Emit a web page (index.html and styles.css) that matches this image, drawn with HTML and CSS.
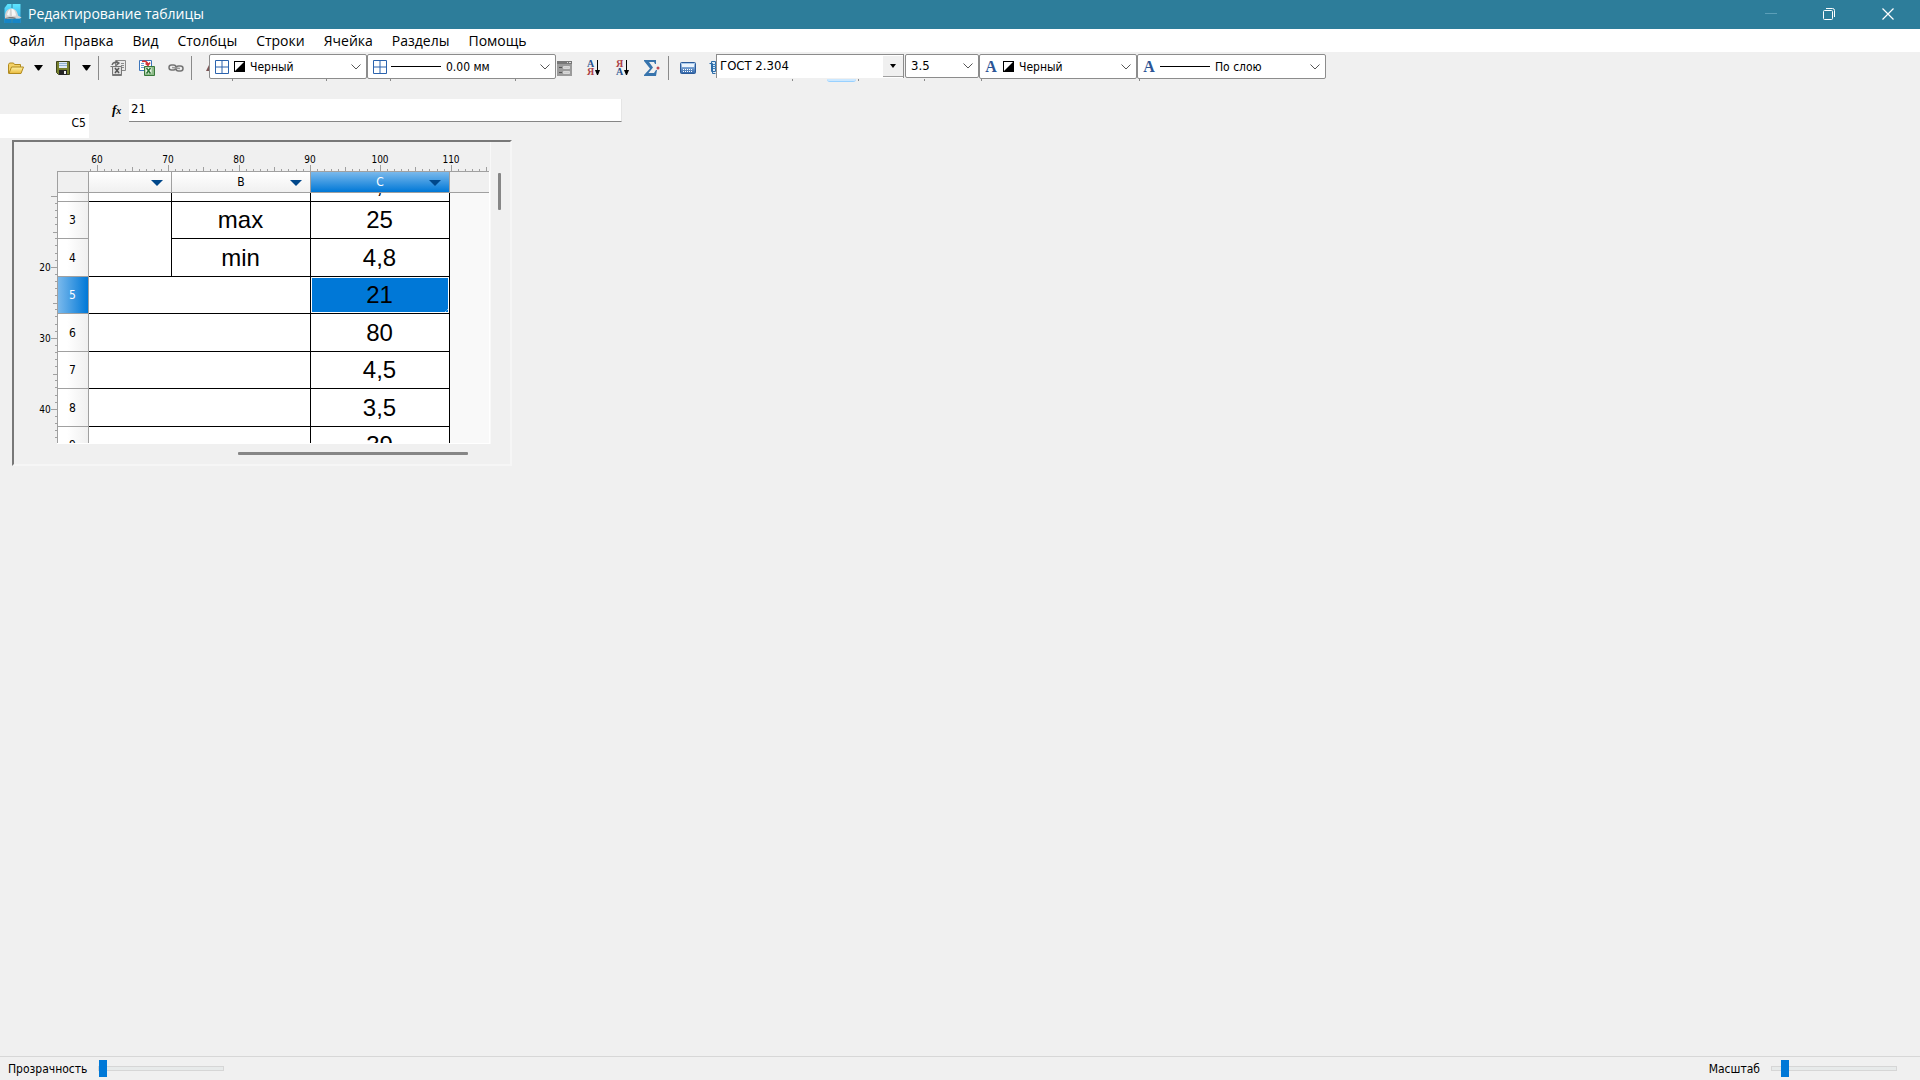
FILE: index.html
```html
<!DOCTYPE html>
<html lang="ru">
<head>
<meta charset="utf-8">
<title>Редактирование таблицы</title>
<link rel="stylesheet" href="styles.css">
</head>
<body>
<svg class="defs" aria-hidden="true">
  <defs>
    <linearGradient id="gold" x1="0" y1="0" x2="0" y2="1"><stop offset="0" stop-color="#fff3a8"/><stop offset="1" stop-color="#e9b93a"/></linearGradient>
    <linearGradient id="sky" x1="0" y1="0" x2="0" y2="1"><stop offset="0" stop-color="#5fe6ff"/><stop offset="1" stop-color="#2a9be0"/></linearGradient>
    <linearGradient id="calc" x1="0" y1="0" x2="0" y2="1"><stop offset="0" stop-color="#b4d4f4"/><stop offset="1" stop-color="#2f64a8"/></linearGradient>
    <symbol id="grid" viewBox="0 0 14 14"><path d="M.5.5h13v13H.5zM7 0v14M0 7h14" fill="#fff" stroke="#2b63ad"/></symbol>
    <symbol id="swatch" viewBox="0 0 11 11"><path d="M0 0h11v11H0z"/><path d="M1 1h9L1 10z" fill="#fff"/></symbol>
    <symbol id="chevron" viewBox="0 0 10 6"><path d="M.5.5L5 5 9.500.5" fill="none" stroke="#555"/></symbol>
    <symbol id="tri" viewBox="0 0 9 6"><path d="M0 0h9L5 5.500H4z"/></symbol>
    <symbol id="filter" viewBox="0 0 12 6"><path d="M0 0h12L6 6z" fill="#00478a"/></symbol>
    <g id="hticks"><path d="M.5 23v6M35.500 25v4M7.500 27v2M14.500 27v2M21.500 27v2M28.500 27v2M42.500 27v2M49.500 27v2M57.500 27v2M64.500 27v2"/></g>
    <g id="vticks"><path d="M37 .5h6M39 36.500h4M41 7.500h2M41 14.500h2M41 21.500h2M41 28.500h2M41 42.500h2M41 49.500h2M41 57.500h2M41 64.500h2"/></g>
  </defs>
</svg>

<header class="titlebar">
  <svg class="logo" viewBox="0 0 18 20"><path d="M4 0h13v19H1V4z" fill="url(#sky)"/><path d="M1 13h7v6H1zM9 15h8v4H9z" fill="#1685c6"/><path d="M8.500 0v4M8.500 15v4" stroke="#2d7d9a"/><path d="M1.500 14V11.500C2 7 4.500 4.500 8 4.500s6 3 6.500 7l3.500 2c-1 1.200-4 1.200-6 .8L1.500 15z" fill="#d3d3d3"/><path d="M3.500 11c.5-3 1.500-4.500 3-5.500L6 12zM8 4.800c3 .5 4 3 4.500 6.700L8.500 12z" fill="#f6f6f6"/><path d="M1.500 14.500c3-2 8-2 11-.5l-1 1c-3-1-7-1-10 0z" fill="#777"/></svg>
  <h1>Редактирование таблицы</h1>
  <div class="winbuttons">
    <button disabled aria-label="Свернуть"><svg width="12" height="12"><path d="M0 5.500h12" stroke="#5c9fb8"/></svg></button>
    <button aria-label="Восстановить"><svg width="12" height="12" fill="none" stroke="#fff"><rect x=".5" y="2.500" width="9" height="9" rx="1"/><path d="M3 .5h6.500a2 2 0 0 1 2 2V9"/></svg></button>
    <button aria-label="Закрыть"><svg width="12" height="12" stroke="#fff" stroke-width="1.200"><path d="M.5.5l11 11M11.500.5l-11 11"/></svg></button>
  </div>
</header>

<nav class="menu">
  <a href="#">Файл</a><a href="#">Правка</a><a href="#">Вид</a><a href="#">Столбцы</a><a href="#">Строки</a><a href="#">Ячейка</a><a href="#">Разделы</a><a href="#">Помощь</a>
</nav>

<div class="toolbar">
  <div class="tools">
    <div class="split">
      <button aria-label="Открыть"><svg width="16" height="16" viewBox="0 0 16 16"><path d="M.5 13.500v-9l1-1.500h4l1 1.500h6v2.500" fill="#f4d267" stroke="#b18a1f"/><path d="M1 13.500L3.500 7h12L13 13.500z" fill="url(#gold)" stroke="#b18a1f"/></svg></button>
      <button aria-label="Варианты открытия"><svg width="9" height="6"><use href="#tri"/></svg></button>
    </div>
    <div class="split">
      <button aria-label="Сохранить"><svg width="16" height="16" viewBox="0 0 16 16"><path d="M.5 1.500h13v13h-11l-2-2z" fill="#77802c" stroke="#3d431d"/><path d="M3 2h8v6H3z" fill="#dfeaf5"/><path d="M3 3.500h8M3 5.500h8" stroke="#92b2d0"/><path d="M3 10h8v5H3z" fill="#252525"/><path d="M8 11h2v3H8z" fill="#eee"/></svg></button>
      <button aria-label="Варианты сохранения"><svg width="9" height="6"><use href="#tri"/></svg></button>
    </div>
  </div>
  <span class="sep"></span>
  <div class="tools">
    <button aria-label="Экспорт в Excel"><svg width="16" height="16" viewBox="0 0 16 16" fill="none"><path d="M5.500.5h10v10h-10z" fill="#e8e8e8" stroke="#8a8a8a"/><path d="M11 3.500h3M11 5.500h3M12 7.500h2" stroke="#8a8a8a"/><path d="M.5 6.500h2v9h9v-2" fill="#bbb" stroke="#777"/><path d="M2.500 6.500h9v8h-9z" fill="#dedede" stroke="#777"/><path d="M5 8l4 5M9 8l-4 5" stroke="#555" stroke-width="1.500"/><path d="M2 5c1-3 3-3 6-2M6 1l3 2-3 2.500" stroke="#666" stroke-width="1.300"/></svg></button>
    <button aria-label="Импорт из Excel"><svg width="16" height="16" viewBox="0 0 16 16" fill="none"><path d="M.5.500h12v10H.5z" fill="#fff" stroke="#3c75bb"/><path d="M2 3.500h3M2 5.500h3M2 7.500h3M9 3.500h2" stroke="#6a9bd1"/><path d="M5.500 15.500v-9h10v9z" fill="#8dbb89" stroke="#38783a"/><path d="M6.500 7.500h6v6h-6z" fill="#f2f8ef"/><path d="M7.500 8l4 5.500M11.500 8l-4 5.500" stroke="#2b7433" stroke-width="1.500"/><path d="M3 1.500c3-1 5 0 6 3M6.500 3.500L9 5.500l2-3" stroke="#d23338" stroke-width="1.500"/></svg></button>
    <button aria-label="Связь"><svg width="16" height="16" viewBox="0 0 16 16" fill="none" stroke="#747474" stroke-width="1.500"><rect x="1" y="5" width="7" height="5" rx="2.500"/><rect x="8" y="6" width="7" height="5" rx="2.500"/><path d="M4 7.500l8 1" stroke="#999"/></svg></button>
  </div>
  <span class="sep"></span>
  <svg class="sliver" width="3" height="16"><path d="M3 3L0 9h3z" fill="#7c5555"/></svg>

  <div class="combo color">
    <svg width="14" height="14"><use href="#grid"/></svg><svg width="11" height="11"><use href="#swatch"/></svg>
    <select aria-label="Цвет границы"><option>Черный</option></select>
    <svg width="10" height="6"><use href="#chevron"/></svg>
    <i class="notch n1"></i><i class="notch n2"></i>
  </div>
  <div class="combo line">
    <svg width="14" height="14"><use href="#grid"/></svg><span class="stroke"></span>
    <select aria-label="Толщина границы"><option>0.00 мм</option></select>
    <svg width="10" height="6"><use href="#chevron"/></svg>
    <i class="notch n1"></i><i class="notch n3"></i>
  </div>
  <div class="tools after">
    <button aria-label="Форма"><svg width="16" height="16" viewBox="0 0 16 16"><path d="M0 1h15v15H0z" fill="#9b9b9b"/><path d="M0 1h15v3H0z" fill="#777"/><path d="M10 2.500h1M12 2.500h2" stroke="#ddd"/><path d="M2 7.500h3M2 12.500h3" stroke="#555"/><path d="M6.500 6.500h6v2h-6zM6.500 11.500h6v2h-6z" fill="#ccc" stroke="#d8d8d8"/></svg></button>
    <button class="sort" aria-label="Сортировать по возрастанию"><span><b class="blue">А</b><b class="red">Я</b></span><svg width="5" height="16"><path d="M2.500 0v13" stroke="#000"/><path d="M0 10h5l-2 5H2z"/></svg></button>
    <button class="sort" aria-label="Сортировать по убыванию"><span><b class="red">Я</b><b class="blue">А</b></span><svg width="5" height="16"><path d="M2.500 0v13" stroke="#000"/><path d="M0 10h5l-2 5H2z"/></svg></button>
    <button aria-label="Сумма"><svg width="16" height="16" viewBox="0 0 16 16"><path d="M0 0h12v4h-1L10 2H5l4 5.500L4.500 13H10l2-3h1l-1 6H0v-1l6-6.500L0 1z" fill="#3774ad"/><circle cx="14" cy="8" r="1.500" fill="#bd4852"/></svg></button>
  </div>
  <span class="sep"></span>
  <div class="tools">
    <button aria-label="Калькулятор"><svg width="16" height="16" viewBox="0 0 16 16"><rect x=".5" y="2.500" width="15" height="11" rx="1" fill="url(#calc)" stroke="#2b5a99"/><path d="M2 4h12v3H2z" fill="#eaf3fc"/><path d="M3 9.500h10M3 11.500h10" stroke="#fff" stroke-dasharray="1 1"/></svg></button>
    <button class="cut" aria-label="Справочник"><svg width="7" height="16"><path d="M.5 3.500h3v10h3M2.500 1.500h4v10h-4z" fill="#d8ebfa" stroke="#2c6ba7"/><path d="M4 4.500h3M4 6.500h3M4 8.500h3" stroke="#3b80bd"/></svg></button>
  </div>
  <div class="combo font">
    <input type="text" aria-label="Шрифт" value="ГОСТ 2.304">
    <button aria-label="Выбрать шрифт"><svg width="6" height="4" viewBox="0 0 6 4"><path d="M0 0h6L3 4z"/></svg></button>
    <i class="notch n4"></i><i class="hot"></i><i class="notch n5"></i>
  </div>
  <div class="combo size">
    <select aria-label="Высота текста"><option>3.5</option></select>
    <svg width="10" height="6"><use href="#chevron"/></svg>
    <i class="notch n6"></i>
  </div>
  <div class="combo color text">
    <b class="letter">A</b><svg width="11" height="11"><use href="#swatch"/></svg>
    <select aria-label="Цвет текста"><option>Черный</option></select>
    <svg width="10" height="6"><use href="#chevron"/></svg>
    <i class="notch n7"></i>
  </div>
  <div class="combo line text">
    <b class="letter">A</b><span class="stroke"></span>
    <select aria-label="Толщина текста"><option>По слою</option></select>
    <svg width="10" height="6"><use href="#chevron"/></svg>
    <i class="notch n7"></i>
  </div>
</div>

<div class="formula">
  <input class="address" type="text" aria-label="Адрес ячейки" value="C5">
  <label for="fx"><i>f</i><i class="x">x</i></label>
  <input class="value" id="fx" type="text" value="21">
</div>

<main>
  <section class="frame">
    <svg class="hruler" width="476" height="29" stroke="#a0a0a0">
      <path d="M76.500 27v2"/>
      <use href="#hticks" x="83"/><use href="#hticks" x="154"/><use href="#hticks" x="225"/><use href="#hticks" x="296"/><use href="#hticks" x="366"/><use href="#hticks" x="437"/>
      <g class="nums"><text x="83" y="21">60</text><text x="154" y="21">70</text><text x="225" y="21">80</text><text x="296" y="21">90</text><text x="366" y="21">100</text><text x="437" y="21">110</text></g>
    </svg>
    <svg class="vruler" width="43" height="272" stroke="#a0a0a0">
      <use href="#vticks" y="25"/><use href="#vticks" y="96"/><use href="#vticks" y="167"/>
      <path d="M37 238.500h6M41 245.500h2M41 252.500h2M41 259.500h2M41 266.500h2"/>
      <g class="nums"><text x="31" y="100">20</text><text x="31" y="171">30</text><text x="31" y="242">40</text></g>
    </svg>
    <div class="sheet">
      <table>
        <colgroup><col class="c-num"><col class="c-a"><col class="c-b"><col class="c-b"><col></colgroup>
        <thead>
          <tr>
            <td></td>
            <th scope="col"><button aria-label="Фильтр столбца A"><svg width="12" height="6"><use href="#filter"/></svg></button></th>
            <th scope="col">B<button aria-label="Фильтр столбца B"><svg width="12" height="6"><use href="#filter"/></svg></button></th>
            <th scope="col" class="sel">C<button aria-label="Фильтр столбца C"><svg width="12" height="6"><use href="#filter"/></svg></button></th>
            <td class="void"></td>
          </tr>
        </thead>
        <tbody>
          <tr class="peek"><th></th><td></td><td></td><td><span>,</span></td><td class="void"></td></tr>
          <tr><th scope="row">3</th><td rowspan="2"></td><td>max</td><td>25</td><td class="void"></td></tr>
          <tr class="tall"><th scope="row">4</th><td>min</td><td>4,8</td><td class="void"></td></tr>
          <tr><th scope="row" class="sel">5</th><td colspan="2"></td><td class="active">21<svg class="grip" width="5" height="5"><path d="M0 5l5-5M3 5l2-2" stroke="#fff" stroke-dasharray="1 1"/></svg></td><td class="void"></td></tr>
          <tr class="tall"><th scope="row">6</th><td colspan="2"></td><td>80</td><td class="void"></td></tr>
          <tr><th scope="row">7</th><td colspan="2"></td><td>4,5</td><td class="void"></td></tr>
          <tr class="tall"><th scope="row">8</th><td colspan="2"></td><td>3,5</td><td class="void"></td></tr>
          <tr><th scope="row">9</th><td colspan="2"></td><td>39</td><td class="void"></td></tr>
        </tbody>
      </table>
    </div>
    <div class="vscroll"><span></span></div>
    <div class="hscroll"><span></span></div>
  </section>
</main>

<footer class="status">
  <label for="opacity">Прозрачность</label><input id="opacity" type="range" min="0" max="100" value="0">
  <label class="push" for="zoom">Масштаб</label><input id="zoom" type="range" min="0" max="100" value="8">
</footer>
</body>
</html>
```
FILE: styles.css
```css
* { box-sizing: border-box; }

body {
  margin: 0;
  min-height: 100vh;
  display: flex;
  flex-direction: column;
  background: #f0f0f0;
  color: #000;
  font: 12px/16px "DejaVu Sans Condensed", "Noto Sans", sans-serif;
}

button, input, select {
  margin: 0;
  padding: 0;
  border: 0;
  background: none;
  color: inherit;
  font: inherit;
  outline: 0;
}

svg { display: block; flex: none; }
.defs { position: absolute; width: 0; height: 0; }

/* Title bar and menu */
.titlebar {
  display: flex;
  align-items: center;
  height: 29px;
  padding: 0 2px 2px 3px;
  background: #2d7d9a;
  color: #fff;
}
.logo { width: 19px; height: 20px; }
.titlebar h1 {
  margin: 0 0 0 6px;
  font: 14px/20px "Open Sans", sans-serif;
}
.winbuttons { display: flex; margin-left: auto; }
.winbuttons button {
  display: flex;
  align-items: center;
  justify-content: center;
  width: 58px;
  height: 27px;
}
.winbuttons button:last-child { width: 60px; }

.menu {
  display: flex;
  gap: 19px;
  height: 23px;
  padding-left: 9px;
  background: #fff;
  font: 14px/24px "Open Sans", sans-serif;
}
.menu a { color: inherit; text-decoration: none; }

/* Toolbar */
.toolbar {
  display: flex;
  align-items: flex-start;
  height: 29px;
  padding: 2px 0 0 8px;
}
.tools {
  display: flex;
  align-items: center;
  gap: 13px;
  height: 28px;
}
.split { display: flex; align-items: center; gap: 10px; }
.sep {
  width: 1px;
  height: 24px;
  margin: 2px 11px 0 7px;
  background: #8a8a8a;
}
.sliver { margin: 8px 0 0 3px; }
.after { padding: 0 1px; }

.sort { display: flex; width: 16px; }
.sort span { display: grid; width: 9px; }
.sort b { font: bold 10px/8px "Liberation Serif", serif; }
.blue { color: #26508c; }
.red { color: #ad4146; }

.combo {
  position: relative;
  display: flex;
  align-items: center;
  height: 25px;
  padding: 0 5px;
  background: #fff;
  border: 1px solid #8c8c8c;
  border-radius: 2px;
}
.combo select {
  flex: 1;
  min-width: 0;
  appearance: none;
}
.color { width: 158px; gap: 5px; }
.line { width: 189px; gap: 4px; }
.line select { padding-left: 1px; }
.stroke { width: 50px; height: 1px; background: #000; }
.letter {
  width: 14px;
  color: #2c5596;
  font: bold 16px/20px "Liberation Serif", serif;
  text-align: center;
}
.text { z-index: 1; padding-left: 4px; }
.font {
  width: 188px;
  height: 24px;
  margin-right: 1px;
  padding: 0 0 0 3px;
  border-width: 1px 1px 0;
  border-radius: 0;
  font-size: 13px;
}
.font input { flex: 1; min-width: 0; height: 22px; padding-bottom: 2px; }
.font button {
  display: flex;
  align-items: center;
  justify-content: center;
  width: 20px;
  height: 21px;
  background: #f0f0f0;
  border-bottom: 1px solid #a0a0a0;
}
.size { width: 74px; height: 24px; font-size: 13px; }

/* Ends of the toolbar items that the drop-downs lie over */
.notch {
  position: absolute;
  top: 24px;
  width: 1px;
  height: 2px;
  background: #8a8a8a;
}
.n1 { left: 22px; }
.n2 { left: 116px; }
.n3 { left: 147px; }
.n4 { left: 75px; }
.n5 { left: 141px; }
.n6 { left: 18px; }
.n7 { left: 1px; }
.hot {
  position: absolute;
  top: 24px;
  left: 110px;
  width: 29px;
  height: 3px;
  background: #cce8ff;
  border-bottom: 1px solid #99d1ff;
  border-radius: 0 0 3px 3px;
}

/* Formula bar */
.formula {
  display: flex;
  align-items: flex-start;
  padding-top: 18px;
}
.address {
  width: 89px;
  height: 24px;
  margin-top: 15px;
  padding: 0 3px 6px 0;
  background: #fff;
  text-align: right;
}
.formula label {
  width: 40px;
  padding: 2px 0 0 23px;
  font: bold 13px/18px "Liberation Serif", serif;
}
.formula .x { font-size: 10px; }
.value {
  width: 493px;
  height: 23px;
  padding: 0 2px 4px;
  background: #fff;
  border: solid #e5e5e5;
  border-width: 0 1px 1px 0;
  border-bottom-color: #868686;
  font-size: 13px;
}

/* Table view */
main { flex: 1; padding: 2px 12px; }
.frame {
  display: grid;
  grid-template: 29px 273px 20px / 43px 433px 20px;
  width: max-content;
  border: 2px solid;
  border-color: #787878 #f6f6f6 #f6f6f6 #787878;
}
.hruler { grid-area: 1 / 1 / 2 / 3; }
.vruler { grid-area: 2 / 1; }
.nums {
  fill: #000;
  stroke: none;
  font-size: 10px;
  text-anchor: middle;
}
.sheet {
  grid-area: 2 / 2;
  overflow: hidden;
  border: solid #fff;
  border-width: 0 1px 1px 0;
}
.vscroll { grid-area: 1 / 3 / 3 / 4; padding: 31px 0 0 7px; border-left: 1px solid #f8f8f8; }
.vscroll span { display: block; width: 3px; height: 37px; background: #868686; border-radius: 1px; }
.hscroll { grid-area: 3 / 1 / 4 / 4; padding: 8px 0 0 224px; }
.hscroll span { display: block; width: 230px; height: 3px; background: #868686; border-radius: 1px; }

table {
  table-layout: fixed;
  width: 432px;
  border-collapse: separate;
  border-spacing: 0;
}
.c-num { width: 32px; }
.c-a { width: 83px; }
.c-b { width: 139px; }
th, td { padding: 0; }
th {
  position: relative;
  border: solid #a0a0a0;
  border-width: 0 1px 1px 0;
  font-weight: normal;
}
thead th, thead td {
  height: 22px;
  border: solid #a0a0a0;
  border-width: 1px 1px 1px 0;
}
thead td:first-child, tbody th { border-left-width: 1px; }
thead th { background: linear-gradient(#fff, #f0f0f0); }
thead th.sel { background: linear-gradient(#7ab9ec, #0078d7); color: #fff; }
th button { position: absolute; right: 8px; top: 8px; }
thead .void { border-right: 0; }
tbody th { padding-right: 1px; background: linear-gradient(90deg, #fff 30%, #f0f0f0); }
tbody th.sel { background: linear-gradient(90deg, #7ab9ec, #0078d7); color: #fff; }
tbody tr { height: 37px; }
tbody .tall { height: 38px; }
tbody .peek { height: 9px; }
tbody td {
  padding-right: 1px;
  background: #fff;
  border: solid #000;
  border-width: 0 1px 1px 0;
  font: 24px/32px "Liberation Sans", Arial, sans-serif;
  text-align: center;
}
tbody .void { background: #f9f9f9; border: 0; }
.peek span {
  display: flex;
  justify-content: center;
  align-items: flex-end;
  height: 8px;
  overflow: hidden;
}
.active {
  position: relative;
  background: #0078d7;
  box-shadow: inset 0 0 0 1px #fff;
}
.grip { position: absolute; right: 0; bottom: 0; }

/* Status bar */
.status {
  display: flex;
  align-items: center;
  height: 24px;
  padding: 0 23px 0 8px;
  border-top: 1px solid #d7d7d7;
}
.status label { margin-right: 11px; }
.status .push { margin-left: auto; }
input[type="range"] {
  appearance: none;
  width: 126px;
  height: 17px;
}
input[type="range"]::-webkit-slider-runnable-track {
  height: 5px;
  background: #e7eaea;
  border: 1px solid #d6d6d6;
}
input[type="range"]::-webkit-slider-thumb {
  appearance: none;
  width: 8px;
  height: 17px;
  margin-top: -7px;
  background: #0078d7;
}
```
